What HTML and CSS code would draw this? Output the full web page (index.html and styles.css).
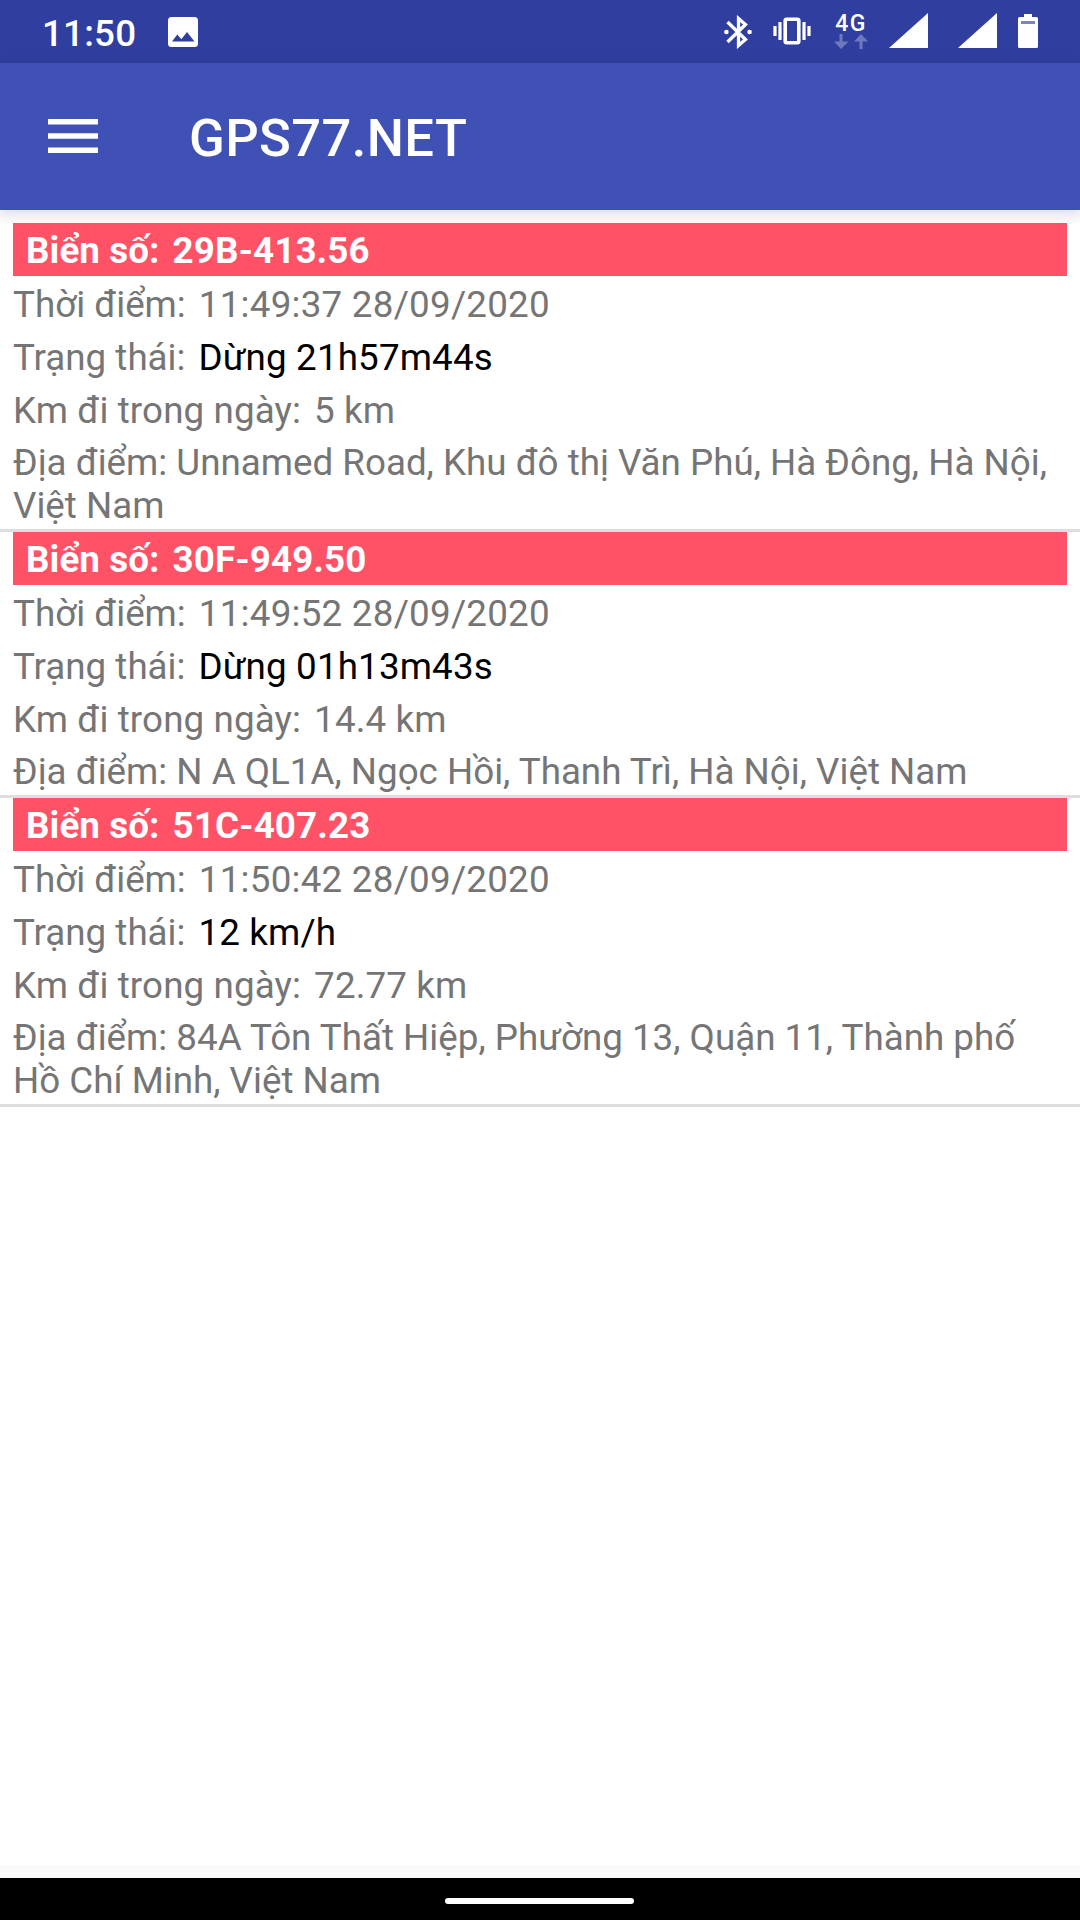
FILE: index.html
```html
<!DOCTYPE html>
<html lang="vi">
<head>
    <meta charset="UTF-8">
    <meta name="viewport" content="width=device-width, initial-scale=1.0">
    <title>GPS77.NET</title>
    <link rel="stylesheet" href="styles.css">
</head>
<body>

<div class="status-bar">
    <span class="clock">11:50</span>
    <svg class="icon-image" width="30" height="30" viewBox="0 0 30 30">
        <path fill="#fff" fill-rule="evenodd" d="M3.500 0h23a3.500 3.500 0 0 1 3.500 3.500v23a3.500 3.500 0 0 1-3.500 3.500h-23a3.500 3.500 0 0 1-3.500-3.500v-23a3.500 3.500 0 0 1 3.500-3.500zM4 24.500h22.500L19 15l-5.600 7.200L9.300 17.600z"/>
    </svg>

    <div class="status-icons">
        <!-- bluetooth -->
        <svg class="icon-bluetooth" width="28" height="34" viewBox="0 0 28 34">
            <path fill="none" stroke="#fff" stroke-width="3.300" d="M3.500 7L21.500 24.500L14.500 30.500V3.500L21.500 9.500L3.500 27"/>
            <circle cx="2.400" cy="17" r="2.300" fill="#fff"/>
            <circle cx="25.600" cy="17" r="2.300" fill="#fff"/>
        </svg>
        <!-- vibrate -->
        <svg class="icon-vibrate" width="38" height="28" viewBox="0 0 38 28">
            <rect x="12.200" y="2.200" width="13.600" height="23.600" rx="1.500" fill="none" stroke="#fff" stroke-width="3.600"/>
            <path stroke="#fff" stroke-width="3.200" d="M7 5v18M31 5v18M2 9v10M36 9v10"/>
        </svg>
        <!-- mobile data -->
        <div class="mobile-data">
            <span>4G</span>
            <svg width="34" height="15" viewBox="0 0 34 15">
                <path fill="#6e78bf" d="M5.500 0h3v7.500h6L7 15L0 7.500h5.500zM25.500 15h3V7.500h5.500L27 0l-7 7.500h5.500z"/>
            </svg>
        </div>
        <!-- signal SIM 1, SIM 2 -->
        <svg class="icon-signal" width="39" height="35" viewBox="0 0 39 35">
            <path fill="#fff" d="M0 35L39 0v35z"/>
        </svg>
        <svg class="icon-signal" width="39" height="35" viewBox="0 0 39 35">
            <path fill="#fff" d="M0 35L39 0v35z"/>
        </svg>
        <!-- battery -->
        <svg class="icon-battery" width="20" height="34" viewBox="0 0 20 34">
            <path fill="#fff" d="M6 0h8v3h4.500a1.500 1.500 0 0 1 1.500 1.500v28a1.500 1.500 0 0 1-1.500 1.500h-17a1.500 1.500 0 0 1-1.500-1.500v-28a1.500 1.500 0 0 1 1.500-1.500h4.500z"/>
            <path fill="#7c83c4" d="M3 7h14v3H3z"/>
        </svg>
    </div>
</div>

<header class="app-bar">
    <svg class="menu" width="50" height="34" viewBox="0 0 50 34">
        <path fill="#fff" d="M0 0h50v5.500H0zM0 14.200h50v5.500H0zM0 28.500h50v5.500H0z"/>
    </svg>
    <h1>GPS77.NET</h1>
</header>

<main class="vehicle-list">
    <div class="vehicle">
        <div class="plate"><span>Biển số:</span><span>29B-413.56</span></div>
        <div class="row"><span>Thời điểm:</span><span class="time">11:49:37 28/09/2020</span></div>
        <div class="row"><span>Trạng thái:</span><span class="state">Dừng 21h57m44s</span></div>
        <div class="row"><span class="distance">Km đi trong ngày:</span><span>5 km</span></div>
        <p class="address">Địa điểm: Unnamed Road, Khu đô thị Văn Phú, Hà Đông, Hà Nội, Việt Nam</p>
    </div>
    <div class="vehicle">
        <div class="plate"><span>Biển số:</span><span>30F-949.50</span></div>
        <div class="row"><span>Thời điểm:</span><span class="time">11:49:52 28/09/2020</span></div>
        <div class="row"><span>Trạng thái:</span><span class="state">Dừng 01h13m43s</span></div>
        <div class="row"><span class="distance">Km đi trong ngày:</span><span>14.4 km</span></div>
        <p class="address">Địa điểm: N A QL1A, Ngọc Hồi, Thanh Trì, Hà Nội, Việt Nam</p>
    </div>
    <div class="vehicle">
        <div class="plate"><span>Biển số:</span><span>51C-407.23</span></div>
        <div class="row"><span>Thời điểm:</span><span class="time">11:50:42 28/09/2020</span></div>
        <div class="row"><span>Trạng thái:</span><span class="state">12 km/h</span></div>
        <div class="row"><span class="distance">Km đi trong ngày:</span><span>72.77 km</span></div>
        <p class="address">Địa điểm: 84A Tôn Thất Hiệp, Phường 13, Quận 11, Thành phố Hồ Chí Minh, Việt Nam</p>
    </div>
</main>

<footer class="nav-bar">
    <div class="home-pill"></div>
</footer>

</body>
</html>
```

FILE: styles.css
```css
* {
    box-sizing: border-box;
}
body {
    margin: 0;
    height: 1920px;
    display: flex;
    flex-direction: column;
    font-family: Roboto, sans-serif;
    font-size: 36.75px;
    line-height: 43px;
    color: #757575;
    background-color: #fafafa;
}

/* Status bar */
.status-bar {
    height: 63px;
    padding: 0 42px;
    display: flex;
    align-items: flex-start;
    color: #fff;
    background-color: #303f9f;
}
.clock {
    margin-top: 12px;
    width: 94px;
    font-weight: 500;
    letter-spacing: 0.2px;
}
.icon-image {
    margin: 17px 0 0 32px;
}
.status-icons {
    margin-left: auto;
    display: flex;
}
.icon-bluetooth {
    margin-top: 15px;
}
.icon-vibrate {
    margin: 17px 0 0 21px;
}
.mobile-data {
    width: 34px;
    margin: 14px 0 0 23px;
    display: flex;
    flex-direction: column;
    align-items: center;
}
.mobile-data span {
    font-size: 23px;
    font-weight: 500;
    line-height: 20px;
    letter-spacing: 1.5px;
}
.icon-signal {
    margin: 13px 0 0 21px;
}
.icon-signal + .icon-signal {
    margin-left: 30px;
}
.icon-battery {
    margin: 14px 0 0 21px;
}

/* App bar */
.app-bar {
    height: 147px;
    padding-left: 48px;
    display: flex;
    align-items: center;
    color: #fff;
    background-color: #3f51b5;
    box-shadow: 0 2px 12px rgba(0, 0, 0, 0.14);
}
.menu {
    margin-bottom: 2px;
}
.app-bar h1 {
    margin: 3px 0 0 91px;
    font-size: 52.5px;
    font-weight: 500;
    line-height: 62px;
    letter-spacing: 0.4px;
}

/* Vehicle list */
.vehicle-list {
    flex: 1;
    margin-top: 13px;
    background-color: #fff;
}
.vehicle {
    padding: 0 13px;
    border-bottom: 3px solid #dedede;
}
.plate,
.row {
    height: 53px;
    display: flex;
    gap: 13px;
}
.plate {
    padding: 6px 13px;
    font-weight: bold;
    letter-spacing: 0.1px;
    color: #fff;
    background-color: #ff5267;
}
.row {
    padding-top: 7px;
}
.time {
    letter-spacing: 0.25px;
}
.state {
    letter-spacing: 0.15px;
    color: #000;
}
.distance,
.distance + span {
    letter-spacing: 0.12px;
}
.address {
    margin: 0;
    padding: 6px 0 2px;
}

/* Navigation bar */
.nav-bar {
    height: 42px;
    margin-top: 13px;
    padding: 20px 0 0 445px;
    background-color: #000;
}
.home-pill {
    width: 189px;
    height: 6px;
    border-radius: 3px;
    background-color: #fff;
}
```
